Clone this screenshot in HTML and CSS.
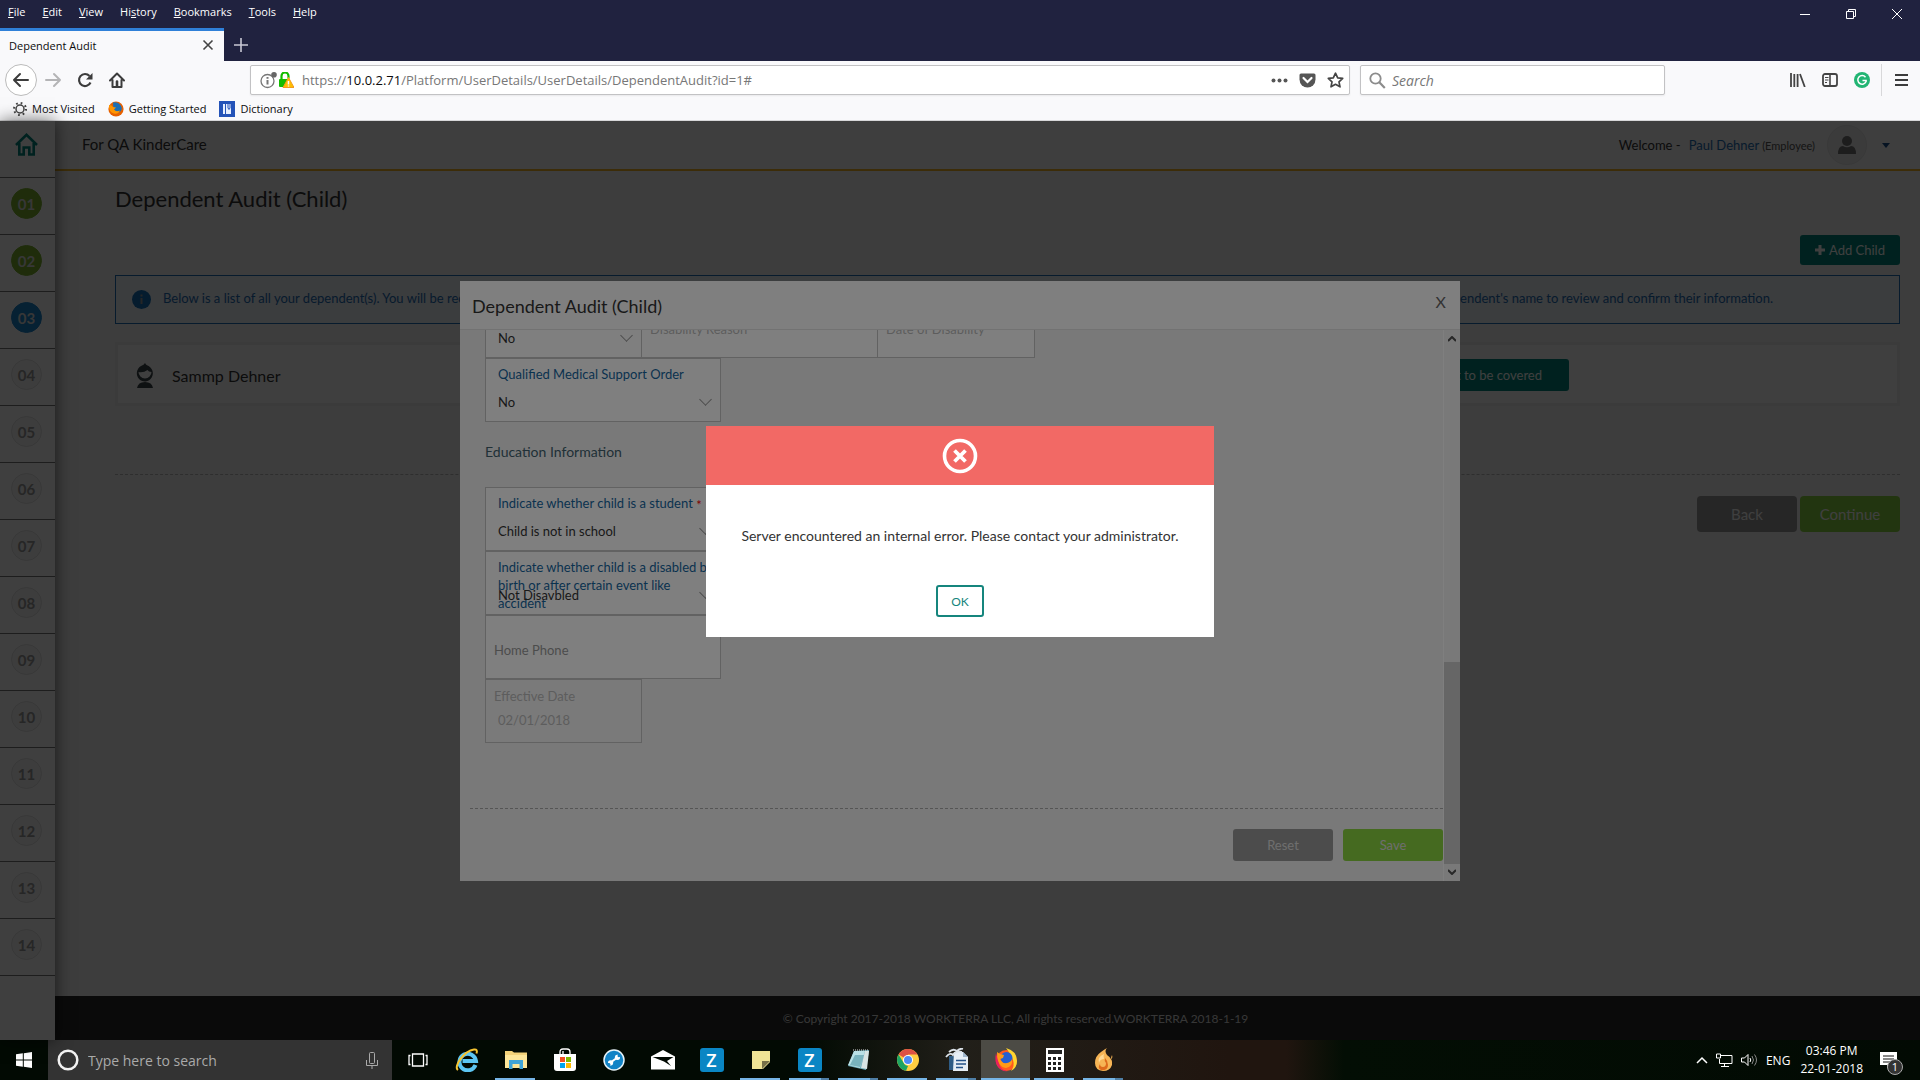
FILE: index.html
```html
<!DOCTYPE html>
<html lang="en">
<head>
<meta charset="utf-8">
<meta name="viewport" content="width=device-width, initial-scale=1">
<title>Dependent Audit</title>
<link rel="stylesheet" href="styles.css">
</head>
<body>
<header class="browser">
  <div class="menubar">
    <nav class="menus">
      <a href="#"><u>F</u>ile</a><a href="#"><u>E</u>dit</a><a href="#"><u>V</u>iew</a><a href="#">Hi<u>s</u>tory</a><a href="#"><u>B</u>ookmarks</a><a href="#"><u>T</u>ools</a><a href="#"><u>H</u>elp</a>
    </nav>
    <div class="window-controls">
      <button aria-label="Minimize"><svg width="10" height="10" viewBox="0 0 10 10"><path d="M0 5.500h10" stroke="#fff"/></svg></button>
      <button aria-label="Restore"><svg width="10" height="10" viewBox="0 0 10 10" fill="none" stroke="#fff"><path d="M.5 2.500h7v7h-7zM2.500 2.500v-2h7v7h-2"/></svg></button>
      <button aria-label="Close"><svg width="10" height="10" viewBox="0 0 10 10" stroke="#fff"><path d="M0 0l10 10M10 0L0 10"/></svg></button>
    </div>
  </div>
  <div class="tabs">
    <div class="tab"><span>Dependent Audit</span><button aria-label="Close tab"><svg width="12" height="12" viewBox="0 0 12 12" stroke="#444" stroke-width="1.600"><path d="M1.500 1.500l9 9M10.500 1.500l-9 9"/></svg></button></div>
    <button class="new-tab" aria-label="New tab"><svg width="14" height="14" viewBox="0 0 14 14" stroke="#c8c8d4" stroke-width="1.600"><path d="M7 0v14M0 7h14"/></svg></button>
  </div>
  <div class="toolbar">
    <div class="nav-buttons">
      <button class="back" aria-label="Back"><svg width="18" height="16" viewBox="0 0 18 16" fill="none" stroke="#3c3c3c" stroke-width="2" stroke-linecap="round" stroke-linejoin="round"><path d="M16 8H2M8 2L2 8l6 6"/></svg></button>
      <button aria-label="Forward"><svg width="17" height="16" viewBox="0 0 17 16" fill="none" stroke="#b4b4b6" stroke-width="2" stroke-linecap="round" stroke-linejoin="round"><path d="M1 8h14M9 2l6 6-6 6"/></svg></button>
      <button aria-label="Reload"><svg width="16" height="16" viewBox="0 0 16 16" fill="none" stroke="#3c3c3c" stroke-width="2.200"><path d="M13.500 10.500A6 6 0 1 1 12.500 4"/><path d="M15.500 1v6.500H9z" fill="#3c3c3c" stroke="none"/></svg></button>
      <button aria-label="Home"><svg width="16" height="16" viewBox="0 0 16 16" fill="none" stroke="#3c3c3c" stroke-width="2" stroke-linejoin="round" stroke-linecap="round"><path d="M1 8.500L8 1.500l7 7M3.500 8v7h9V8"/><path d="M8 14v-4.500" stroke-width="2.600"/></svg></button>
    </div>
    <form class="urlbar">
      <svg width="17" height="17" viewBox="0 0 17 17" fill="none" stroke="#777"><circle cx="7.500" cy="9" r="6.500" stroke-width="1.300"/><path d="M7.500 8v4.500" stroke-width="2"/><path d="M7.500 5v1.800" stroke-width="2"/><circle cx="14" cy="2.800" r="2.800" fill="#666" stroke="none"/></svg>
      <svg width="16" height="16" viewBox="0 0 16 16"><path d="M3.500 7V4a3.500 3.500 0 0 1 7 0v2.500" fill="none" stroke="#12bc00" stroke-width="2.200"/><rect x="1" y="7" width="9" height="8" rx="1" fill="#12bc00"/><path d="M10.500 5.500L16 15.500H5z" fill="#ffbf00" stroke="#f29a1f"/><path d="M10.500 9v3.500M10.500 13.500v1" stroke="#fff" stroke-width="1.500"/></svg>
      <a class="url" href="#">https://<b>10.0.2.71</b>/Platform/UserDetails/UserDetails/DependentAudit?id=1#</a>
      <svg width="17" height="5" viewBox="0 0 17 5" fill="#555"><circle cx="2.500" cy="2.500" r="2"/><circle cx="8.500" cy="2.500" r="2"/><circle cx="14.500" cy="2.500" r="2"/></svg>
      <svg width="17" height="15" viewBox="0 0 17 15"><path d="M2 .5h13q1.500 0 1.500 1.500v4.500a8 8 0 0 1-16 0V2Q.5.5 2 .5z" fill="#555"/><path d="M4.500 5l4 4 4-4" fill="none" stroke="#fff" stroke-width="2.200" stroke-linecap="round"/></svg>
      <svg width="17" height="16" viewBox="0 0 17 16" fill="none" stroke="#444" stroke-width="1.700" stroke-linejoin="round"><path d="M8.500 1.200l2.200 4.600 5 .6-3.700 3.400 1 5-4.500-2.500L4 14.800l1-5L1.300 6.400l5-.6z"/></svg>
    </form>
    <form class="searchbar">
      <svg width="17" height="17" viewBox="0 0 17 17" fill="none" stroke="#8c8c8c"><circle cx="6.500" cy="6.500" r="5.200" stroke-width="1.800"/><path d="M10.300 10.300l5.500 5.700" stroke-width="2.200"/></svg>
      <input type="text" placeholder="Search" aria-label="Search the web">
    </form>
    <div class="tools">
      <button aria-label="Library"><svg width="16" height="14" viewBox="0 0 16 14" fill="none" stroke="#444" stroke-width="1.800"><path d="M1 0v14M4.300 1v13M7.600 1v13M10 1l4.800 13"/></svg></button>
      <button aria-label="Sidebars"><svg width="16" height="14" viewBox="0 0 16 14" fill="none" stroke="#444"><rect x="1" y="1" width="14" height="12" rx="2" stroke-width="1.800"/><path d="M8 1v12" stroke-width="1.600"/><path d="M3 4.500h3.500M3 7h3.500M3 9.500h2"/></svg></button>
      <button aria-label="Grammar"><svg width="16" height="16" viewBox="0 0 16 16" fill="none"><circle cx="8" cy="8" r="8" fill="#22b573"/><path d="M11.500 5.200a4.300 4.300 0 1 0 .6 4.300V8.500H8.500" stroke="#fff" stroke-width="1.500"/></svg></button>
      <button class="app-menu" aria-label="Open menu"><svg width="13" height="12" viewBox="0 0 13 12" stroke="#3c3c3c" stroke-width="2"><path d="M0 1h13M0 6h13M0 11h13"/></svg></button>
    </div>
  </div>
  <nav class="bookmarks">
    <a href="#"><svg width="14" height="14" viewBox="0 0 14 14" fill="none" stroke="#444"><circle cx="7" cy="7" r="4" stroke-width="1.500"/><circle cx="7" cy="7" r="6" stroke-width="2" stroke-dasharray="1.700 3.012"/></svg>Most Visited</a>
    <a href="#"><svg width="16" height="16" viewBox="0 0 16 16"><circle cx="8" cy="8" r="7.600" fill="#e66000"/><path d="M5 1.500a7 7 0 0 1 8.500 4.500q1 4-3 5.500-4 .5-5-3Z" fill="#1c6fb5"/><path d="M1 4q2.500-.5 4 2l3 .5-2 2q2 3 6 1-2 4-6 3Q.5 11 1 4z" fill="#ff9500"/></svg>Getting Started</a>
    <a href="#"><svg width="16" height="16" viewBox="0 0 16 16"><path fill="#2453b8" d="M0 0h16v16H0z"/><path d="M4 3h8v10H4z" fill="#e8f0ff"/><path d="M6.500 3v10M9 3v4l1 1.500L11 7V3" stroke="#2453b8" fill="none"/></svg>Dictionary</a>
  </nav>
</header>

<div class="app">
  <nav class="steps">
    <a class="home" href="#" aria-label="Home"><svg width="23" height="23" viewBox="0 0 23 23" fill="none" stroke="#00877d" stroke-width="2.600"><path d="M1 12L11.500 1.800 22 12"/><path d="M4.300 10v11.500h4.400v-7h5.600v7h4.400V10"/></svg></a>
    <a class="done" href="#"><span>01</span></a><a class="done" href="#"><span>02</span></a><a class="current" href="#"><span>03</span></a><a href="#"><span>04</span></a><a href="#"><span>05</span></a><a href="#"><span>06</span></a><a href="#"><span>07</span></a><a href="#"><span>08</span></a><a href="#"><span>09</span></a><a href="#"><span>10</span></a><a href="#"><span>11</span></a><a href="#"><span>12</span></a><a href="#"><span>13</span></a><a href="#"><span>14</span></a>
  </nav>
  <div class="page">
    <header class="topbar">
      <span class="company">For QA KinderCare</span>
      <span class="welcome">Welcome -</span>
      <a class="user" href="#">Paul Dehner <small>(Employee)</small></a>
      <span class="avatar"><svg width="18" height="18" viewBox="0 0 18 18" fill="#777"><ellipse cx="9" cy="5" rx="5" ry="5"/><path d="M0 18q0-8 5-8 4 2.500 8 0 5 0 5 8z"/></svg></span>
      <svg class="caret" width="8" height="5" viewBox="0 0 8 5"><path d="M0 0h8L4 5z" fill="#1b4f8a"/></svg>
    </header>
    <main class="content">
      <h1>Dependent Audit (Child)</h1>
      <div class="actions"><button class="btn teal"><svg width="10" height="10" viewBox="0 0 10 10"><path d="M5 0v10M0 5h10" stroke="#fff" stroke-width="3"/></svg>Add Child</button></div>
      <div class="notice">
        <svg width="19" height="19" viewBox="0 0 19 19"><circle cx="9.500" cy="9.500" r="9.500" fill="#1470b8"/><path d="M9.500 8v6M9.500 4.500v2" stroke="#999" stroke-width="2"/></svg>
        <span>Below is a list of all your dependent(s). You will be required</span><span>dependent's name to review and confirm their information.</span>
      </div>
      <div class="dependent">
        <svg width="18" height="25" viewBox="0 0 18 25"><path d="M9 0q1 2 2 2.300A8 8.300 0 1 1 5 3Q8 2 9 0z" fill="#3a4448"/><path d="M2.500 9q5 1 9-2 1 1.800 4 2a6.500 6.500 0 1 1-13 0z" fill="#fff"/><path d="M1 25q1-6 8-6t8 6z" fill="#3a4448"/></svg>
        <span>Sammp Dehner</span>
        <button class="btn teal">Dependent not to be covered</button>
      </div>
      <div class="paging"><button class="btn gray">Back</button><button class="btn green">Continue</button></div>
    </main>
    <footer class="legal">© Copyright 2017-2018 WORKTERRA LLC, All rights reserved.WORKTERRA 2018-1-19</footer>
  </div>

  <div class="backdrop">
    <section class="modal" aria-label="Dependent details">
      <header><h2>Dependent Audit (Child)</h2><button aria-label="Close">X</button></header>
      <div class="scroller">
        <form class="fields">
          <div class="row">
            <div class="field small pick"><select aria-label="Disabled"><option>No</option></select></div>
            <div class="field plain raised"><label for="reason">Disability Reason</label><input id="reason"></div>
            <div class="field small plain raised"><label for="since">Date of Disability</label><input id="since"></div>
          </div>
          <div class="field pick"><label for="qmso">Qualified Medical Support Order</label><select id="qmso"><option>No</option></select></div>
          <h3>Education Information</h3>
          <div class="field pick"><label for="student">Indicate whether child is a student <i>*</i></label><select id="student"><option>Child is not in school</option></select></div>
          <div class="field pick"><label for="birth">Indicate whether child is a disabled by birth or after certain event like accident</label><select id="birth"><option>Not Disavbled</option></select></div>
          <div class="field empty"><input placeholder="Home Phone" aria-label="Home Phone"></div>
          <div class="field small plain off"><label for="effective">Effective Date</label><input id="effective" value="02/01/2018"></div>
          <div class="form-actions"><button type="button" class="btn gray">Reset</button><button type="button" class="btn green">Save</button></div>
        </form>
        <div class="scrollbar">
          <svg width="8" height="6" viewBox="0 0 8 6" fill="none" stroke="#505050" stroke-width="2"><path d="M0 5l4-4 4 4"/></svg>
          <div class="track"><div class="thumb"></div></div>
          <svg width="8" height="6" viewBox="0 0 8 6" fill="none" stroke="#505050" stroke-width="2"><path d="M0 1l4 4 4-4"/></svg>
        </div>
      </div>
    </section>
  </div>
  <div class="backdrop alert-layer">
    <section class="alert" role="alertdialog" aria-label="Error">
      <div class="alert-head"><svg width="36" height="36" viewBox="0 0 36 36" fill="none" stroke="#fff"><circle cx="18" cy="18" r="15.500" stroke-width="3.600"/><path d="M12.500 12.500l11 11M23.500 12.500l-11 11" stroke-width="3.800"/></svg></div>
      <p>Server encountered an internal error. Please contact your administrator.</p>
      <button>OK</button>
    </section>
  </div>
</div>

<footer class="taskbar">
  <button class="start" aria-label="Start"><svg width="16" height="16" viewBox="0 0 16 16" fill="#fff"><path d="M0 2.200L6.800 1.300v6.200H0zM7.800 1.200L16 0v7.500H7.800zM0 8.500h6.800v6.200L0 13.800zM7.800 8.500H16V16l-8.200-1.200z"/></svg></button>
  <label class="cortana"><svg width="22" height="22" viewBox="0 0 22 22"><circle cx="11" cy="11" r="9.300" fill="none" stroke="#f2f2f2" stroke-width="2.500"/></svg><input placeholder="Type here to search"><svg width="12" height="17" viewBox="0 0 12 17" fill="none" stroke="#aaa"><rect x="3.500" y=".5" width="5" height="11" rx="1"/><path d="M.5 8v5.500h11V8M6 13.500V17"/></svg></label>
  <div class="apps">
    <button aria-label="Task view"><svg width="20" height="14" viewBox="0 0 20 14" fill="none" stroke="#fff" stroke-width="1.300"><path d="M4.500 1h11v12h-11zM2.500 2.500H1v9h1.500M17.500 2.500H19v9h-1.500"/></svg></button>
    <button aria-label="Internet Explorer"><svg width="24" height="24" viewBox="0 0 24 24" fill="none"><path d="M20.500 17A8.300 8.300 0 1 1 21 13H7.500" stroke="#5cc5f2" stroke-width="4"/><path d="M3 22C-2 19 9 3 19 1.500q4-.5 2.500 4" stroke="#f5c431" stroke-width="2"/></svg></button>
    <button class="open" aria-label="File Explorer"><svg width="22" height="20" viewBox="0 0 22 20"><path d="M0 1h7l2 1.500h13V18H0z" fill="#f3d27a"/><path d="M0 5h22v13H0z" fill="#fde69a"/><path d="M4 10h14v9h-3.500v-5h-7v5H4z" fill="#3fa4d8"/></svg></button>
    <button aria-label="Store"><svg width="24" height="24" viewBox="0 0 24 24"><path d="M7 8V4q0-3 3-3h4q3 0 3 3v4M10 7V3" fill="none" stroke="#fff" stroke-width="1.300"/><path d="M1 6h22v14q0 3-3 3H4q-3 0-3-3z" fill="#fff"/><path d="M7 9h5v5H7z" fill="#f25022"/><path d="M13 9h5v5h-5z" fill="#7fba00"/><path d="M7 15h5v5H7z" fill="#00a4ef"/><path d="M13 15h5v5h-5z" fill="#ffb900"/></svg></button>
    <button aria-label="Support"><svg width="22" height="22" viewBox="0 0 22 22"><circle cx="11" cy="11" r="10" fill="#1283c6" stroke="#e8f4fa" stroke-width="1.500"/><path d="M7 14l8-6" stroke="#fff" stroke-width="2"/><path d="M17 8A2.600 2.600 0 1 1 15 5.800l-.8 1.700 1.300.8zM5 14A2.600 2.600 0 1 1 7 16.400l.6-1.500-1.300-1z" fill="#fff"/></svg></button>
    <button aria-label="Mail"><svg width="24" height="20" viewBox="0 0 24 20"><path d="M0 6.500L12 0l12 6.500V19.500H0z" fill="#fff"/><path d="M1.500 7h21L16 11l4 5-7-4.500z" fill="#020a03"/></svg></button>
    <button aria-label="Z"><span class="z">Z</span></button>
    <button class="open" aria-label="Sticky Notes"><svg width="18" height="18" viewBox="0 0 18 18"><path d="M0 0h18v11l-7 7H0z" fill="#efe395"/><path d="M10 10h8l-8 8z" fill="#777048"/></svg></button>
    <button class="open many" aria-label="Z"><span class="z">Z</span></button>
    <button class="open many" aria-label="Notepad"><svg width="24" height="22" viewBox="0 0 24 22"><path d="M7 2l15-1-3 20-18-4z" fill="#6aaab8"/><path d="M7 2l11 0-5 17-12-3z" fill="#b9e0e6"/><path d="M8 6h9l-4 12-10-2z" fill="#4f94a4" opacity=".6"/><path d="M18 2l4 0-2 18-6-1z" fill="#d8e4e4"/><path d="M6 1h16" stroke="#ddd" stroke-dasharray="1 1"/></svg></button>
    <button class="open" aria-label="Chrome"><svg width="22" height="22" viewBox="0 0 22 22"><circle cx="11" cy="11" r="11" fill="#ffcd40"/><path d="M11 11L1.500 5.500A11 11 0 0 1 20.500 5.500H11z" fill="#dd5144"/><path d="M1.500 5.500L8 16l3 1-2 4.800A11 11 0 0 1 1.500 5.500z" fill="#1da462"/><circle cx="11" cy="11" r="5" fill="#fff"/><circle cx="11" cy="11" r="4" fill="#4c8bf5"/></svg></button>
    <button class="open many" aria-label="Writer"><svg width="24" height="24" viewBox="0 0 24 24"><path d="M4 8h6v14H4z" fill="#2f5c85"/><path d="M9 4h9l5 5v14H8z" fill="#e6eef6"/><path d="M18 4v5h5z" fill="#9fb6cc"/><path d="M11 12.500h10M11 16h10M11 19.500h7" stroke="#255389" stroke-width="1.500"/><path d="M1 9q4-5 7-2Q11 2 17 4M4 4q4-4 8-1 3-3 6-2" fill="none" stroke="#dce2e8" stroke-width="1.800"/></svg></button>
    <button class="open active" aria-label="Firefox"><svg width="24" height="24" viewBox="0 0 24 24"><circle cx="12.500" cy="12.500" r="10.500" fill="#ff5a1f"/><path d="M12 0q11 3 11 13 0 7-6 10 4-5 2-11Q17 6 12 0z" fill="#ffd52e"/><path d="M2 5Q0 14 4 19q4 5 10 4-8-1-9-8z" fill="#e9215c"/><circle cx="12.500" cy="10" r="6" fill="#255fd0"/><path d="M3 4q3 3 7 3l-1 3-3 1q2 5 7 4 4-1 5-4 1 8-6 9-9-1-9-16z" fill="#ff9a16"/></svg></button>
    <button class="open" aria-label="Calculator"><svg width="18" height="24" viewBox="0 0 18 24"><path d="M0 0h18v24H0z" fill="#fff"/><path d="M2 2h14v4H2zM2 9h3v3H2zM7 9h3v3H7zM12 9h3v3h-3zM2 14h3v3H2zM7 14h3v3H7zM12 14h3v3h-3zM2 19h3v3H2zM7 19h3v3H7zM12 19h3v3h-3z" fill="#222"/></svg></button>
    <button class="open many" aria-label="Flame"><svg width="20" height="24" viewBox="0 0 20 24"><path d="M13 0Q10 3 13 7q6 4 5 10-2 6-9 6Q1 22 1 15 1 8 7 4 11 1 13 0z" fill="#f6b455"/><path d="M10 6Q3 9 5 15q1-4 5-4-1-3 0-5z" fill="#ffd995"/><path d="M11 10q-1 3 1 5 0 4-3 4t-3-3q-3 4 1 6 7 1 7-5 0-4-3-7z" fill="#dd6a1c"/><path d="M18 7q1 3-1 4 0-2 1-4z" fill="#f6b455"/></svg></button>
  </div>
  <div class="tray">
    <svg width="12" height="8" viewBox="0 0 12 8" fill="none" stroke="#fff" stroke-width="1.500"><path d="M1 7l5-5 5 5"/></svg>
    <svg width="17" height="14" viewBox="0 0 17 14" fill="none" stroke="#fff"><path d="M5 2.500h11v8H3.500V6M.5 1h4v4h-4zM8.500 10.500v3M5 13.500h8"/></svg>
    <svg width="17" height="14" viewBox="0 0 17 14" fill="none" stroke="#fff"><path d="M.5 5h3L7 1.500v11L3.500 9h-3zM9 5q1.500 2 0 4"/><path d="M11 3q3 4 0 8M13.500 1.500q4 5.500 0 11" stroke="#888"/></svg>
    <span>ENG</span>
    <time datetime="2018-01-22T15:46">03:46 PM<br>22-01-2018</time>
    <span class="notes"><svg width="17" height="17" viewBox="0 0 17 17"><path d="M0 0h17v13h-7l-3 3.500V13H0z" fill="#fff"/><path d="M3 4h11M3 7h11M3 10h8" stroke="#111"/></svg><b>1</b></span>
  </div>
</footer>
</body>
</html>
```
FILE: styles.css
```css
* { box-sizing: border-box; }
body { margin: 0; min-height: 100vh; display: flex; flex-direction: column; font-family: Lato, sans-serif; font-size: 14px; color: #333; }
a { color: inherit; text-decoration: none; }
button { font: inherit; color: inherit; border: 0; padding: 0; background: none; display: flex; align-items: center; justify-content: center; }
input, select { font: inherit; color: inherit; border: 0; padding: 0; background: none; outline: 0; min-width: 0; }
svg { flex: none; display: block; }
h1, h2, h3, p { margin: 0; font-weight: 400; }

/* Browser window */
.browser { background: #f9f9fb; font-family: "Open Sans", sans-serif; font-size: 11px; color: #0c0c0d; border-bottom: 1px solid #d6d6d8; }
.menubar { background: #20223f; color: #fff; height: 28px; display: flex; justify-content: space-between; }
.menus { display: flex; gap: 17px; padding: 4px 8px; line-height: 16px; }
.menus a { white-space: nowrap; }
.window-controls { display: flex; }
.window-controls button { width: 46px; }
.tabs { background: #20223f; height: 33px; display: flex; }
.tab { width: 224px; background: #f9f9fb; border-top: 3px solid #2f80d8; padding: 0 10px 2px 9px; display: flex; align-items: center; justify-content: space-between; }
.new-tab { width: 34px; }
.toolbar { height: 38px; display: flex; align-items: center; padding-left: 5px; }
.nav-buttons { display: flex; width: 245px; }
.nav-buttons button { width: 32px; height: 32px; }
.nav-buttons .back { border: 1px solid #bbb; border-radius: 50%; background: #fff; }
.urlbar, .searchbar { height: 30px; border: 1px solid #c2c2c4; border-radius: 2px; background: #fff; display: flex; align-items: center; box-shadow: 0 1px 2px #0001; }
.urlbar { flex: 1; padding: 0 5px 0 9px; gap: 11px; }
.urlbar svg:nth-child(2) { margin-left: -10px; }
.url { flex: 1; font-size: 13px; color: #777; margin-left: -3px; white-space: nowrap; }
.url b { font-weight: 400; color: #0c0c0d; }
.searchbar { width: 305px; margin: 0 117px 0 10px; padding: 0 8px; gap: 6px; }
.searchbar input { font-size: 14px; font-style: italic; flex: 1; }
.searchbar input::placeholder { color: #777; opacity: 1; }
.tools { display: flex; }
.tools button { width: 32px; height: 32px; }
.tools .app-menu { width: 39px; margin-left: 3px; border-left: 1px solid #d8d8da; }
.bookmarks { height: 21px; display: flex; gap: 13px; padding: 0 13px 2px; }
.bookmarks a { display: flex; align-items: center; gap: 5px; }

/* Application */
.app { flex: 1; display: flex; position: relative; background: #f4f4f4; }
.steps { width: 55px; background: #fff; box-shadow: 0 0 16px #0009; z-index: 0; flex: none; }
.steps a { height: 57px; border-bottom: 1px solid #777; display: flex; align-items: center; justify-content: center; padding-right: 2px; }
.steps .home { padding-bottom: 10px; }
.steps span { width: 31px; height: 31px; border-radius: 50%; border: 1px solid #e0e0e0; background: #f6f6f6; font-size: 15px; line-height: 31px; font-weight: 700; color: #999; text-align: center; margin-bottom: 6px; }
.steps .done span { background: #7cb32f; border-color: #7cb32f; color: #ddd; }
.steps .current span { background: #1a84cc; border-color: #1a84cc; color: #ddd; }
.page { flex: 1; display: flex; flex-direction: column; min-width: 0; }
.topbar { height: 50px; border-bottom: 2px solid #f0b323; background: #f8f8f8; display: flex; align-items: center; padding: 0 30px 0 27px; }
.company { flex: 1; font-size: 15px; margin-bottom: 2px; }
.welcome { font-size: 13px; margin-right: 8px; }
.user { color: #1d6db3; font-size: 13px; }
.user small { font-size: 11px; color: #555; }
.avatar { width: 40px; height: 40px; margin: 0 15px 0 12px; border-radius: 50%; background: #eee; border: 1px solid #e4e4e4; display: grid; place-items: center; }
.content { flex: 1; padding: 14px 20px 0 60px; }
h1 { font-size: 22px; line-height: 28px; }
.actions { display: flex; justify-content: flex-end; margin: 22px 0 10px; }
.btn { height: 32px; width: 100px; border-radius: 3px; font-size: 13px; color: #fff; }
.teal { background: #00877d; gap: 4px; }
.gray { background: #999; }
.green { background: #8bd440; }
.actions .btn { height: 30px; }
.notice { height: 49px; border: 1px solid #1e6cb4; background: #edf4fa; color: #1e6cb4; font-size: 13px; display: flex; align-items: center; padding: 0 126px 0 16px; }
.notice svg { margin-right: 12px; }
.notice span { margin-bottom: 4px; white-space: nowrap; }
.notice span:last-child { margin-left: auto; }
.dependent { margin-top: 18px; height: 64px; border: 3px solid #efefef; background: #fff; display: flex; align-items: center; padding: 2px 328px 0 18px; gap: 18px; font-size: 16px; }
.dependent .btn { margin-left: auto; width: auto; padding: 0 27px; }
.paging { margin-top: 68px; padding-top: 21px; border-top: 1px dashed #bbb; display: flex; justify-content: flex-end; gap: 3px; }
.paging .btn { height: 36px; font-size: 15px; border-radius: 4px; }
.legal { height: 44px; background: #282828; color: #ddd; font-size: 12px; line-height: 46px; text-align: center; padding-left: 56px; }

/* Dialogs */
.backdrop { position: absolute; inset: 0; background: #00000080; display: flex; justify-content: center; align-items: flex-start; padding-top: 160px; }
.modal { width: 1000px; height: 600px; background: #f2f2f2; display: flex; flex-direction: column; }
.modal header { height: 49px; background: #fff; border-bottom: 1px solid #e5e5e5; display: flex; justify-content: space-between; padding: 2px 14px 0 12px; align-items: center; }
.modal header button { margin-bottom: 10px; font-size: 16px; color: #666; }
h2 { font-size: 18px; }
.scroller { flex: 1; min-height: 0; display: flex; overflow: hidden; }
.fields { flex: 1; display: flex; flex-direction: column; justify-content: flex-end; align-items: flex-start; padding: 0 0 20px 25px; }
.row { display: flex; }
.field { position: relative; width: 236px; height: 64px; flex: none; background: #fff; border: 1px solid #c4c4c4; font-size: 13px; display: grid; padding: 6px 12px; grid-template-rows: 18px 36px; }
.row .field + .field { margin-left: -1px; width: 237px; }
.row .small.field + .field.small, .small.field { width: 157px; }
.row .field + .small.field { width: 158px; }
.field label { color: #14659e; line-height: 18px; height: 18px; margin-right: -8px; }
.field label i { color: #f00; font-style: normal; vertical-align: -2px; line-height: 1; }
.field select { appearance: none; width: 100%; color: #333; margin-top: 2px; grid-row: 2; }
.pick::after { content: ""; position: absolute; right: 10px; bottom: 17px; width: 8px; height: 8px; border: solid #999; border-width: 0 1px 1px 0; transform: rotate(45deg); }
.plain { padding: 7px 8px; grid-template-rows: 20px 26px; }
.plain label, .off input { color: #bbb; }
.plain input { padding-left: 4px; }
.off { background: #f4f4f4; }
.raised { padding-top: 25px; grid-template-rows: 18px 10px; }
.empty { grid-template-rows: 54px; padding: 7px 8px 1px; }
.empty input::placeholder { color: #999; opacity: 1; }
h3 { font-size: 14px; line-height: 20px; margin: 20px 0 25px; color: #41616f; }
.form-actions { align-self: stretch; margin: 65px 0 0 -15px; border-top: 1px dashed #aaa; padding-top: 20px; display: flex; justify-content: flex-end; gap: 10px; }
.form-actions .btn { color: #ddd; }
.scrollbar { width: 17px; border-left: 1px solid #fff; display: flex; flex-direction: column; align-items: center; padding: 6px 0; gap: 5px; }
.track { flex: 1; align-self: stretch; display: flex; flex-direction: column; justify-content: flex-end; }
.thumb { height: 39%; background: #cdcdcd; }
.alert-layer { padding-top: 305px; }
.alert { width: 508px; background: #fff; display: flex; flex-direction: column; align-items: center; padding-bottom: 20px; }
.alert-head { align-self: stretch; height: 59px; background: #f26965; display: grid; place-items: center; }
.alert p { margin: 41px 0 39px; line-height: 20px; }
.alert button { width: 48px; height: 32px; border: 2px solid #15857d; border-radius: 3px; color: #15857d; font-size: 12px; }

/* Desktop taskbar */
.taskbar { height: 40px; display: flex; color: #fff; font-family: "Open Sans", sans-serif; font-size: 12px; background: linear-gradient(90deg, #020a03 0 42%, #211f19 50%, #20150f 64%, #20150f 67%, #030e04 70%, #020a03); }
.start { width: 48px; }
.cortana { width: 344px; background: #333; display: flex; align-items: center; padding: 0 14px 0 9px; gap: 9px; }
.cortana input { flex: 1; font-size: 14px; }
.cortana input::placeholder { color: #aaa; opacity: 1; }
.apps { display: flex; flex: 1; padding-left: 1px; }
.apps button { width: 49px; height: 40px; position: relative; }
.apps .open::after { content: ""; position: absolute; bottom: 0; left: 4px; width: 40px; height: 2px; background: #76b5e6; }
.apps .many::after { background: linear-gradient(90deg, #76b5e6 32px, #4f7fa6 32px); }
.apps .active { background: #4c4b45; }
.apps .active::after { left: 0; width: 49px; }
.z { width: 24px; height: 24px; border-radius: 3px; background: #0a86c4; font-size: 18px; line-height: 24px; font-weight: 600; }
.tray { display: flex; align-items: center; gap: 8px; padding-right: 23px; }
.tray time { text-align: center; line-height: 18px; margin: 0 9px 0 2px; }
.notes { position: relative; }
.notes b { position: absolute; left: 7px; top: 7px; width: 16px; height: 16px; border: 1px solid #aaa; border-radius: 50%; background: #333; font-size: 11px; line-height: 14px; text-align: center; font-weight: 400; }
```
